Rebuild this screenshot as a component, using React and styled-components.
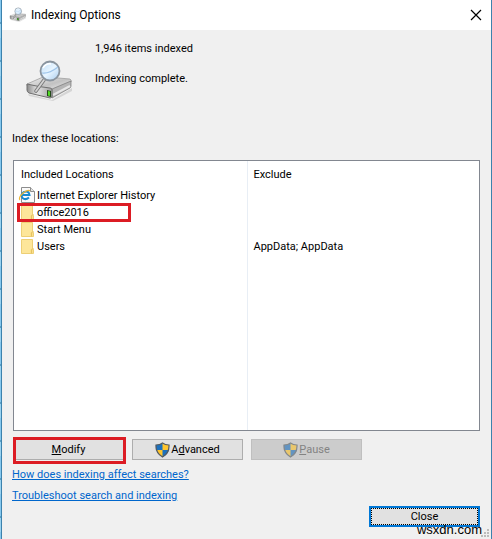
import React from "react";
import styled, { createGlobalStyle } from "styled-components";

const GlobalStyle = createGlobalStyle`
  *, *::before, *::after { box-sizing: border-box; }
  body {
    margin: 0;
    background: #8fcdf0;
    color: #000;
    font: 11px/17px Roboto, "Noto Sans", sans-serif;
  }
`;

const Desktop = styled.div`
  display: flex;
  min-height: 100vh;
  padding-left: 1px;
  background: repeating-linear-gradient(#86c8ee 0 22px, #5b9fc4 22px 24px, #9bd3f0 24px 38px);
`;

const Dialog = styled.main`
  position: relative;
  flex: 1;
  display: flex;
  flex-direction: column;
  background: #f0f0f0;
  border: solid #3c82ad;
  border-width: 0 1px;
`;

const TitleBar = styled.header`
  display: flex;
  align-items: center;
  gap: 5px;
  height: 30px;
  padding: 0 8px 0 7px;
  background: #fff;
`;

const Title = styled.h1`
  flex: 1;
  margin: 0;
  font: 400 12px/18px Roboto, "Noto Sans", sans-serif;
`;

const CloseIconButton = styled.button`
  display: grid;
  place-items: center;
  width: 14px;
  height: 14px;
  padding: 0;
  border: 0;
  background: none;
`;

const Content = styled.div`
  flex: 1;
  display: flex;
  flex-direction: column;
  padding: 10px 11px 12px 10px;
`;

const Status = styled.section`
  display: flex;
  gap: 23px;
  padding-left: 12px;
`;

const StatusIcon = styled.div`
  padding-top: 19px;
  height: 70px;
`;

const StatusText = styled.div`
  display: grid;
  align-content: start;
  gap: 13px;

  p { margin: 0; }
`;

const ListLabel = styled.h2`
  margin: 20px 0 13px;
  font: inherit;
`;

const ListBox = styled.div`
  position: relative;
  flex: 1;
  margin-left: 1px;
  background: #fff;
  border: 1px solid #828790;

  &::after {
    content: "";
    position: absolute;
    top: 0;
    bottom: 0;
    left: 50%;
    border-left: 1px solid #e8eef5;
  }
`;

const LocationTable = styled.table`
  width: 100%;
  table-layout: fixed;
  border-collapse: collapse;

  th {
    height: 26px;
    padding: 0 7px;
    font-weight: 400;
    text-align: left;
  }
  td { height: 17px; padding: 0 7px; }
`;

const Location = styled.span`
  position: relative;
  display: flex;
  align-items: center;
  gap: 2px;
  height: 17px;
`;

const Highlight = styled.span`
  position: absolute;
  inset: -1px auto -1px -4px;
  width: 114px;
  border: 3px solid #dc1c24;
`;

const ButtonRow = styled.div`
  display: flex;
  gap: 8px;
  margin: 8px 0 0 1px;
`;

const PushButton = styled.button`
  position: relative;
  display: flex;
  align-items: center;
  justify-content: center;
  gap: 1px;
  width: 111px;
  height: 21px;
  padding: 0;
  border: 1px solid #adadad;
  background: #e1e1e1;
  color: #000;
  font: inherit;
  line-height: 11px;

  &:disabled {
    border-color: #bfbfbf;
    background: #cccccc;
    color: #838383;
  }
  &:disabled svg { opacity: 0.6; }
`;

const MarkedButton = styled(PushButton)`
  &::after {
    content: "";
    position: absolute;
    inset: -3px -3px -5px -1px;
    border: 3px solid #dc1c24;
  }
`;

const DefaultButton = styled(PushButton)`
  border: 2px solid #0078d7;
  outline: 1px dotted #000;
  outline-offset: -3px;
`;

const Links = styled.nav`
  display: grid;
  justify-items: start;
  gap: 4px;
  margin-top: 6px;
`;

const HelpLink = styled.a`
  color: #0066cc;
  text-decoration: underline;
  text-underline-offset: 1px;
`;

const Footer = styled.footer`
  display: flex;
  justify-content: flex-end;
  margin-top: 2px;
`;

const Watermark = styled.span`
  position: absolute;
  right: 9px;
  bottom: 3px;
  font: 13px/13px "Liberation Sans", Arial, sans-serif;
`;

const Grip = styled.svg`
  position: absolute;
  right: 1px;
  bottom: 1px;
`;

function DriveIcon({ size, id }) {
  return (
    <svg width={size} height={size} viewBox="0 0 48 48" aria-hidden="true">
      <defs>
        <linearGradient id={`${id}-top`} x1="0" y1="0" x2="1" y2="1">
          <stop offset="0" stopColor="#f2f2f2" />
          <stop offset=".55" stopColor="#c2c2c2" />
          <stop offset="1" stopColor="#f0f0f0" />
        </linearGradient>
        <linearGradient id={`${id}-front`} x1="0" y1="0" x2="1" y2="0">
          <stop offset="0" stopColor="#8b8b8b" />
          <stop offset=".4" stopColor="#e4e4e4" />
          <stop offset="1" stopColor="#a0a0a0" />
        </linearGradient>
        <linearGradient id={`${id}-lens`} x1="0" y1="0" x2="1" y2="1">
          <stop offset="0" stopColor="#bddcf6" />
          <stop offset=".5" stopColor="#e8f5ff" />
          <stop offset="1" stopColor="#a9cdef" />
        </linearGradient>
      </defs>
      <path d="M4 35 28 41 48 29v3L29 42 5 37z" fill="#999" opacity=".3" />
      <path d="M3 25 19 18q2-1 4 0l23 2q2 1 1 3L28 31 5 28q-3-1-2-3z" fill={`url(#${id}-top)`} stroke="#989898" strokeWidth=".7" />
      <path d="m28 30 19-8v5q0 1-1 2L28 39z" fill="#b5b5b5" stroke="#777" strokeWidth=".7" />
      <path d="m29 36 17-9" stroke="#e6e6e6" strokeWidth="2" />
      <path d="M3 25q12 3 23 4 2 0 2 2v6q0 2-2 2L5 34q-2-1-2-3z" fill={`url(#${id}-front)`} stroke="#707070" strokeWidth="1" />
      <path d="m23 31 4 1v6l-4-1z" fill="#244a1a" />
      <path d="m24 32 2 .5V37l-2-.5z" fill="#52dc25" />
      <path d="M20 21 12 32" stroke="#777" strokeWidth="3.600" strokeLinecap="round" />
      <path d="M20 21 12 32" stroke="#d2d2d2" strokeWidth="1.800" strokeLinecap="round" />
      <circle cx="26" cy="12" r="9.500" fill={`url(#${id}-lens)`} stroke="#8a949e" strokeWidth="1.800" />
      <path d="M18 14q7 1 16-6" fill="none" stroke="#9fc5ea" strokeWidth="1.200" />
      <path d="M19 9q3-5 8-4" fill="none" stroke="#fff" strokeWidth="1.500" />
    </svg>
  );
}

function FolderIcon() {
  return (
    <svg width="14" height="17" viewBox="0 0 14 17" aria-hidden="true">
      <path d="M.5 1.500h11v9l1 1v4H.5z" fill="#fbe08b" stroke="#edcf75" />
      <path d="M1 2h10v8l-2 2v3H1z" fill="#fde69a" />
      <path d="M10.500 15.500v-4l2-1" fill="none" stroke="#e5c263" />
    </svg>
  );
}

function HistoryIcon() {
  return (
    <svg width="14" height="17" viewBox="0 0 14 17" overflow="visible" aria-hidden="true">
      <path d="M.5.5h9l4 4v11H.5z" fill="#fafafa" stroke="#8d8d8d" />
      <path d="M9.500.5v4h4" fill="#e4e4e4" stroke="#8d8d8d" />
      <path d="M8 10.500Q4.500 13.500 1.500 11-1 7 3 5q5-1.500 5.500 3h-7" fill="none" stroke="#188bd0" strokeWidth="2" />
      <path d="M-1 13Q-3 11 2 6q5-4 7-2" fill="none" stroke="#edb530" strokeWidth="1.200" />
    </svg>
  );
}

function ShieldIcon() {
  return (
    <svg width="15" height="16" viewBox="0 0 15 16" aria-hidden="true">
      <path d="M7.500 1Q10 3 14 3 14.500 11 7.500 15 .5 11 1 3 5 3 7.500 1z" fill="#ffc52d" />
      <path d="M7.500 1v7H1Q.7 5.500 1 3 5 3 7.500 1z" fill="#1c70bd" />
      <path d="M7.500 8H14q-1 4.500-6.500 7z" fill="#1c70bd" />
      <path d="M7.500 1Q10 3 14 3 14.500 11 7.500 15 .5 11 1 3 5 3 7.500 1z" fill="none" stroke="#555b60" strokeWidth="1.200" />
    </svg>
  );
}

const locations = [
  { name: "Internet Explorer History", Icon: HistoryIcon },
  { name: "office2016", Icon: FolderIcon, marked: true },
  { name: "Start Menu", Icon: FolderIcon },
  { name: "Users", Icon: FolderIcon, exclude: "AppData; AppData" },
];

export default function App() {
  return (
    <>
      <GlobalStyle />
      <Desktop>
        <Dialog aria-labelledby="dialog-title">
          <TitleBar>
            <DriveIcon size={17} id="small" />
            <Title id="dialog-title">Indexing Options</Title>
            <CloseIconButton aria-label="Close window">
              <svg width="12" height="12" viewBox="0 0 12 12" aria-hidden="true">
                <path d="m1 1 10 10M11 1 1 11" stroke="#000" strokeWidth="1.200" />
              </svg>
            </CloseIconButton>
          </TitleBar>
          <Content>
            <Status>
              <StatusIcon><DriveIcon size={48} id="large" /></StatusIcon>
              <StatusText>
                <p>1,946 items indexed</p>
                <p>Indexing complete.</p>
              </StatusText>
            </Status>
            <ListLabel id="list-label">Index these locations:</ListLabel>
            <ListBox>
              <LocationTable aria-labelledby="list-label">
                <thead>
                  <tr><th scope="col">Included Locations</th><th scope="col">Exclude</th></tr>
                </thead>
                <tbody>
                  {locations.map(({ name, Icon, marked, exclude }) => (
                    <tr key={name}>
                      <td><Location><Icon />{name}{marked && <Highlight />}</Location></td>
                      <td>{exclude}</td>
                    </tr>
                  ))}
                </tbody>
              </LocationTable>
            </ListBox>
            <ButtonRow>
              <MarkedButton><span><u>M</u>odify</span></MarkedButton>
              <PushButton><ShieldIcon /><span>A<u>d</u>vanced</span></PushButton>
              <PushButton disabled><ShieldIcon /><span><u>P</u>ause</span></PushButton>
            </ButtonRow>
            <Links>
              <HelpLink href="#searches">How does indexing affect searches?</HelpLink>
              <HelpLink href="#troubleshoot">Troubleshoot search and indexing</HelpLink>
            </Links>
            <Footer><DefaultButton>Close</DefaultButton></Footer>
          </Content>
          <Watermark>wsxdn.com</Watermark>
          <Grip width="9" height="9" viewBox="0 0 9 9" aria-hidden="true">
            <path d="M6 0h2v2H6zM3 3h2v2H3zM6 3h2v2H6zM0 6h2v2H0zM3 6h2v2H3zM6 6h2v2H6z" fill="#bcbcbc" />
          </Grip>
        </Dialog>
      </Desktop>
    </>
  );
}
